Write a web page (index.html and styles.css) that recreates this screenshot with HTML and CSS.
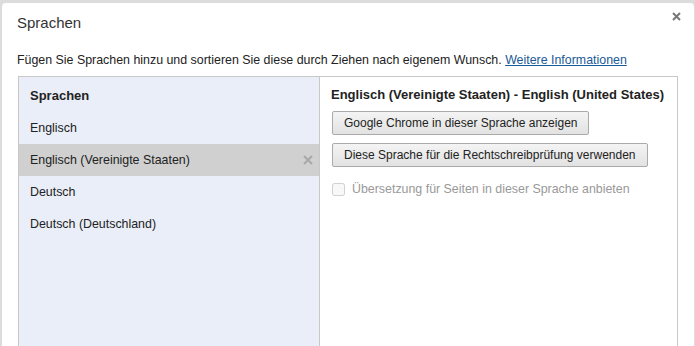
FILE: index.html
```html
<!DOCTYPE html>
<html lang="de">
<head>
    <meta charset="UTF-8">
    <title>Sprachen</title>
    <link rel="stylesheet" href="styles.css">
</head>
<body>
    <div class="dialog">
        <div class="dialog-head">
            <h1>Sprachen</h1>
            <svg class="close" width="9" height="9" viewBox="0 0 9 9"><path d="M1 1L8 8M8 1L1 8" stroke="#777" stroke-width="2"/></svg>
        </div>
        <p class="intro">Fügen Sie Sprachen hinzu und sortieren Sie diese durch Ziehen nach eigenem Wunsch. <a href="#">Weitere Informationen</a></p>

        <div class="panes">
            <div class="lang-list">
                <div class="list-head">Sprachen</div>
                <div class="lang-item">Englisch</div>
                <div class="lang-item selected">Englisch (Vereinigte Staaten)
                    <svg class="remove" width="10" height="10" viewBox="0 0 10 10"><path d="M1 1L9 9M9 1L1 9" stroke="#a8a8a8" stroke-width="2"/></svg>
                </div>
                <div class="lang-item">Deutsch</div>
                <div class="lang-item">Deutsch (Deutschland)</div>
            </div>
            <div class="lang-detail">
                <h3>Englisch (Vereinigte Staaten) - English (United States)</h3>
                <button>Google Chrome in dieser Sprache anzeigen</button>
                <button>Diese Sprache für die Rechtschreibprüfung verwenden</button>
                <label class="check"><input type="checkbox" disabled> Übersetzung für Seiten in dieser Sprache anbieten</label>
            </div>
        </div>
    </div>
</body>
</html>
```

FILE: styles.css
```css
* {
    margin: 0;
    padding: 0;
    box-sizing: border-box;
    font-family: "Liberation Sans", Arial, sans-serif;
}

body {
    background: #dcdcdc;
    height: 346px;
    overflow: hidden;
}

.dialog {
    background: #fff;
    margin: 3px 1px 0 2px;
    border-radius: 4px 4px 0 0;
    height: 400px;
    color: #222;
    font-size: 12.4px;
}

.dialog-head {
    display: flex;
    justify-content: space-between;
    align-items: flex-start;
    padding: 11px 13px 0 15px;
}

.dialog-head h1 {
    font-size: 15px;
    font-weight: normal;
    color: #333;
}

.close {
    margin-top: -2px;
}

.intro {
    padding: 21px 0 0 15px;
    line-height: 16px;
    color: #222;
}

.intro a {
    color: #1a5a96;
}

.panes {
    display: flex;
    margin: 8px 0 0 16px;
    width: 660px;
    height: 300px;
    border: 1px solid #c8c8c8;
    border-bottom: none;
}

.lang-list {
    width: 301px;
    background: #eaeef8;
    border-right: 1px solid #c8c8c8;
}

.list-head {
    font-size: 13px;
    font-weight: bold;
    height: 35px;
    line-height: 37px;
    padding-left: 11px;
}

.lang-item {
    height: 32px;
    line-height: 33px;
    padding: 0 6px 0 11px;
    display: flex;
    justify-content: space-between;
    align-items: center;
}

.lang-item.selected {
    background: #d0d0d0;
}

.lang-detail {
    padding: 10px 0 0 11px;
    display: flex;
    flex-direction: column;
    align-items: flex-start;
}

.lang-detail h3 {
    font-size: 13px;
    margin-bottom: 9px;
}

.lang-detail button {
    font-size: 12px;
    color: #222;
    height: 24px;
    padding: 0 11px;
    margin: 0 0 8px 1px;
    border: 1px solid #aaa;
    border-radius: 2px;
    background: linear-gradient(#f4f4f4, #e2e2e2);
}

.check {
    color: #999;
    display: flex;
    align-items: center;
    gap: 7px;
    margin: 7px 0 0 1px;
}

.check input {
    width: 13px;
    height: 13px;
}
```
